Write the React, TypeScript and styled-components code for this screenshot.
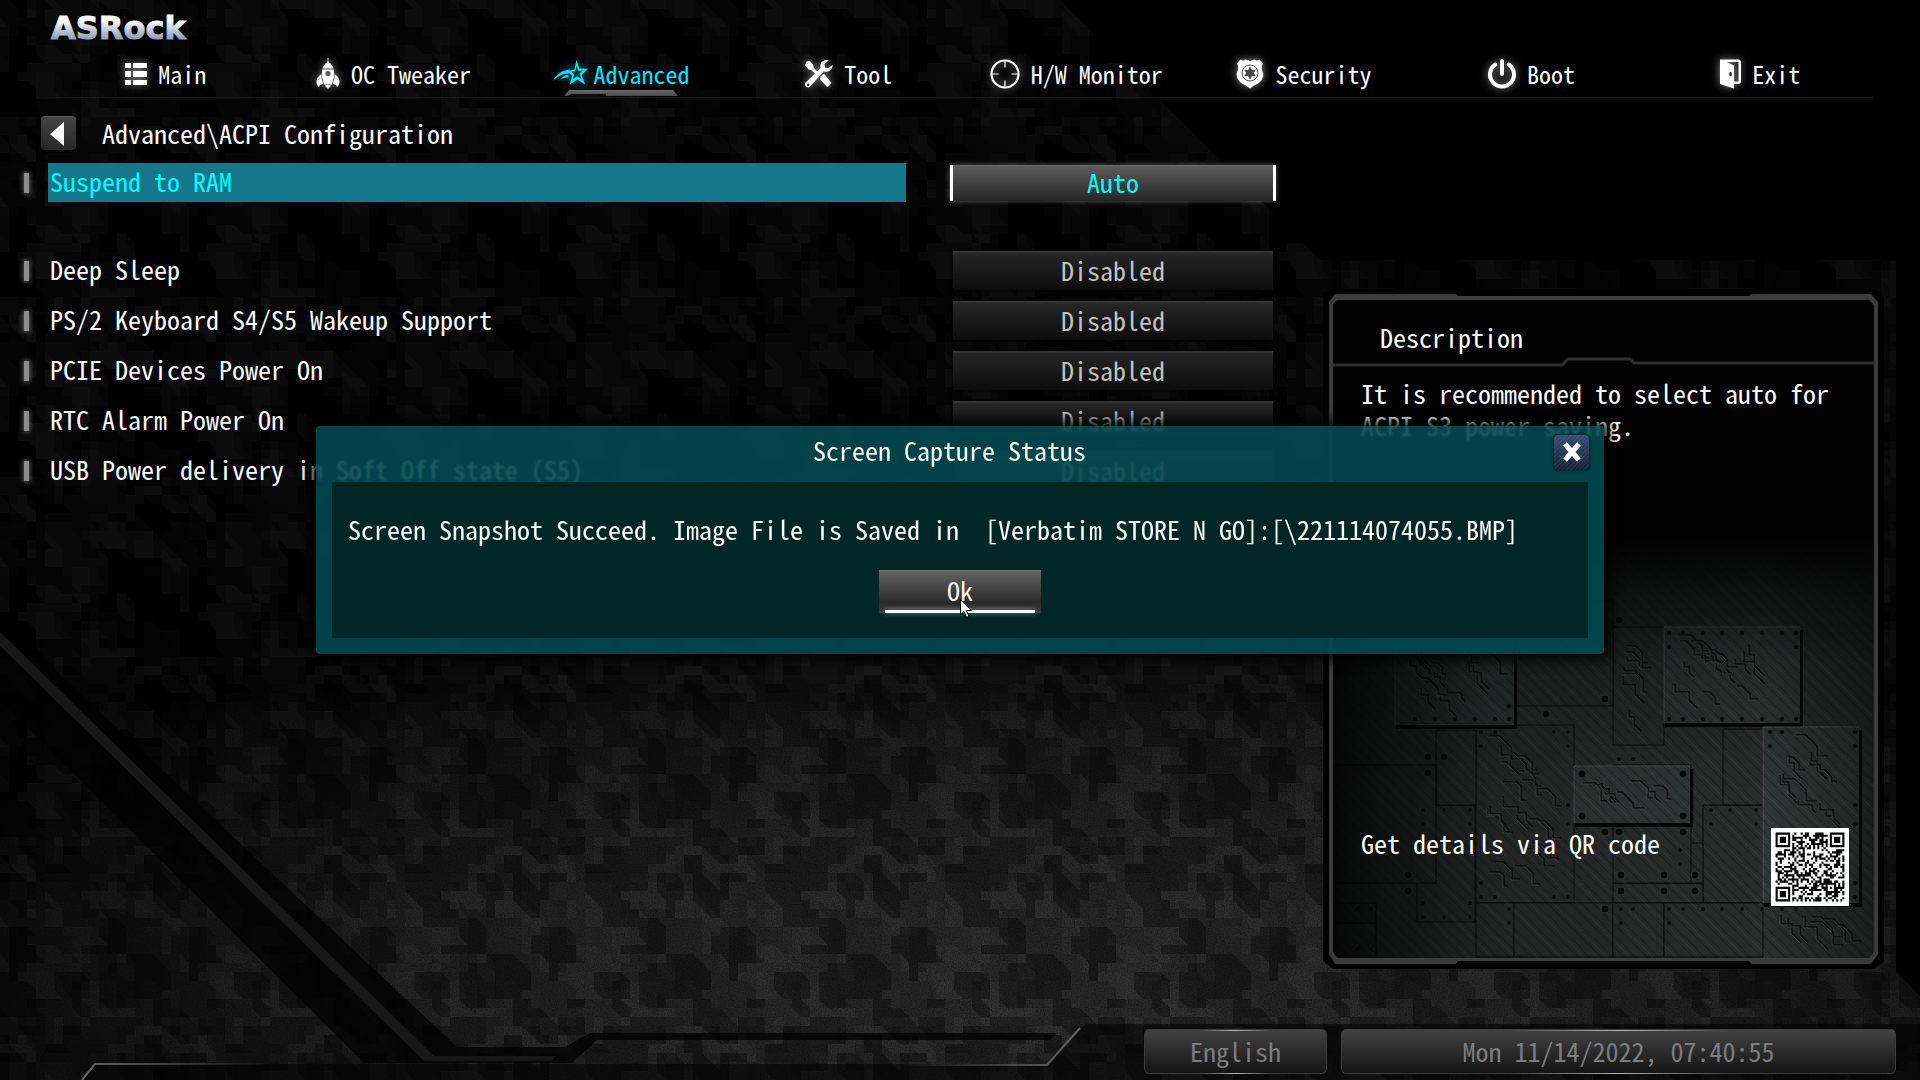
import React from "react";
import styled, { createGlobalStyle, css } from "styled-components";

const mono = `"Noto Sans Mono CJK JP", "Noto Sans CJK JP", "Liberation Mono", monospace`;

const GlobalStyle = createGlobalStyle`
  *, *::before, *::after { box-sizing: border-box; }
  body { margin: 0; background: #000; }
  button, select { font: inherit; font-feature-settings: inherit; }
`;

/* ---------- deterministic random shapes for the camouflage and QR art ---------- */

function rng(seed: number) {
  let s = seed;
  return () => {
    s = (s * 1664525 + 1013904223) % 4294967296;
    return s / 4294967296;
  };
}

const TILE = 180;

function camo(seed: number, count: number) {
  const r = rng(seed);
  let d = "";
  for (let i = 0; i < count; i++) {
    const x = Math.floor(r() * 20) * 9;
    const y = Math.floor(r() * 20) * 9;
    const w = 9 + Math.floor(r() * 3) * 9;
    const h = 9 + Math.floor(r() * 3) * 9;
    const k = r() > 0.62 ? 9 + Math.floor(r() * 2) * 9 : 0;
    for (const ox of [0, -TILE]) {
      for (const oy of [0, -TILE]) {
        d += `M${x + ox} ${y + oy}h${w}l${k} ${k}v${h}h${-w}l${-k} ${-k}z`;
      }
    }
  }
  return d;
}

const camoLight = camo(11, 48);
const camoDim = camo(47, 44);
const camoDark = camo(83, 42);

function qrPath() {
  const n = 33;
  const r = rng(2022);
  const finder = (x: number, y: number) => {
    const d = Math.max(Math.abs(x - 3), Math.abs(y - 3));
    return d === 3 || d <= 1;
  };
  let d = "";
  for (let y = 0; y < n; y++) {
    for (let x = 0; x < n; x++) {
      let on = r() > 0.5;
      if (x < 8 && y < 8) on = finder(x, y) && x < 7 && y < 7;
      else if (x > n - 9 && y < 8) on = finder(x - (n - 7), y) && x > n - 8 && y < 7;
      else if (x < 8 && y > n - 9) on = finder(x, y - (n - 7)) && x < 7 && y > n - 8;
      else if (x > 23 && x < 29 && y > 23 && y < 29) on = Math.max(Math.abs(x - 26), Math.abs(y - 26)) !== 1;
      else if (x === 6 || y === 6) on = (x + y) % 2 === 0;
      if (on) d += `M${x} ${y}h1v1h-1z`;
    }
  }
  return d;
}

/* ---------- layout ---------- */

const Screen = styled.div`
  position: relative;
  isolation: isolate;
  min-height: 100vh;
  display: flex;
  flex-direction: column;
  padding-bottom: 6px;
  overflow: hidden;
  color: #fff;
  font-family: ${mono};
  font-feature-settings: "hwid";
  font-size: 26px;
  line-height: 32px;
`;

const Backdrop = styled.svg`
  position: absolute;
  inset: 0;
  z-index: -1;
  width: 100%;
  height: 100%;
`;

const Header = styled.header`
  display: flex;
  flex-direction: column;
`;

const Brand = styled.div`
  height: 52px;
  padding: 6px 0 0 50px;
`;

const Logo = styled.svg`
  display: block;
  width: 150px;
  height: 44px;
`;

const Tabs = styled.nav`
  display: grid;
  grid-template-columns: repeat(8, 1fr);
  height: 46px;
  margin: 0 47px 0 49px;
  padding: 0 0 0 3px;
  border-bottom: 1px solid #161818;
`;

const Tab = styled.a<{ $active?: boolean }>`
  position: relative;
  display: flex;
  align-items: center;
  justify-content: center;
  gap: 11px;
  padding-bottom: 1px;
  font-size: 24px;
  color: ${(p) => (p.$active ? "#00e5ff" : "#fff")};
  text-decoration: none;
  white-space: nowrap;

  svg {
    flex: none;
    overflow: visible;
    filter: drop-shadow(0 0 4px ${(p) => (p.$active ? "rgba(0, 229, 255, 0.5)" : "rgba(255, 255, 255, 0.55)")});
  }

  ${(p) =>
    p.$active &&
    css`
      gap: 6px;
      &::after {
        content: "";
        position: absolute;
        left: 50%;
        bottom: 1px;
        width: 114px;
        height: 6px;
        transform: translateX(-50%);
        background: linear-gradient(#6a6a6a, #474747);
        clip-path: polygon(5px 0, 109px 0, 100% 100%, 42px 100%, 42px 4px, 7px 4px, 4px 100%, 0 100%);
      }
    `}
`;

const Content = styled.div`
  flex: 1;
  display: grid;
  grid-template-columns: minmax(0, 1fr) 550px;
  column-gap: 53px;
  padding: 0 41px 0 24px;
`;

const Settings = styled.main`
  padding-top: 18px;
`;

const Crumb = styled.div`
  display: flex;
  align-items: center;
  gap: 26px;
  height: 34px;
  margin: 0 0 13px 17px;
`;

const CrumbTitle = styled.h1`
  margin: 0;
  font-size: 26px;
  font-weight: 400;
`;

const BackButton = styled.button`
  display: grid;
  place-items: center;
  width: 35px;
  height: 34px;
  padding: 0 4px 0 0;
  border: 0;
  border-top: 1px solid #5a5a5a;
  border-radius: 4px;
  background: linear-gradient(#454545, #262626);
`;

const Rows = styled.div`
  display: flex;
  flex-direction: column;
  gap: 11px;
`;

const Row = styled.div<{ $active?: boolean }>`
  display: grid;
  grid-template-columns: 5px minmax(0, 1fr) 326px;
  align-items: center;
  height: 39px;
  margin-bottom: ${(p) => (p.$active ? "38px" : "0")};
`;

const Marker = styled.span`
  width: 5px;
  height: 20px;
  background: #8c8c8c;
  box-shadow: 0 0 5px 1px rgba(255, 255, 255, 0.35);
`;

const RowLabel = styled.label<{ $active?: boolean }>`
  height: 39px;
  margin: 0 44px 0 19px;
  padding: 2px 2px 0;
  background: ${(p) => (p.$active ? "#15778a" : "transparent")};
  color: ${(p) => (p.$active ? "#00fbff" : "#fff")};
  white-space: nowrap;
`;

const Value = styled.select<{ $active?: boolean }>`
  appearance: none;
  height: 39px;
  margin: 0 3px;
  padding: 0 0 4px;
  border: 0;
  border-top: 2px solid #333;
  border-radius: 0;
  background: linear-gradient(#262626, #0c0c0c);
  box-shadow: 0 0 4px #000;
  color: #c0c0c0;
  text-align: center;
  text-align-last: center;

  ${(p) =>
    p.$active &&
    css`
      height: 36px;
      margin: 0;
      padding: 0 0 2px;
      border: solid #fff;
      border-width: 0 3px;
      background: linear-gradient(#696969, #5a5a5a 2px, #262626);
      box-shadow: 0 0 5px rgba(255, 255, 255, 0.35);
      color: #00fbff;
    `}
`;

const Description = styled.aside`
  position: relative;
  isolation: isolate;
  display: flex;
  flex-direction: column;
  margin: 196px 0 65px;
`;

const PanelArt = styled.svg`
  position: absolute;
  inset: 0;
  z-index: -1;
  width: 100%;
  height: 100%;
  overflow: visible;
`;

const PanelTitle = styled.h2`
  margin: 0;
  padding: 27px 0 0 51px;
  font-size: 26px;
  font-weight: 400;
`;

const Divider = styled.svg`
  display: block;
  width: 100%;
  height: 14px;
`;

const HelpText = styled.p`
  flex: 1;
  margin: 0;
  padding: 10px 30px 0 32px;
`;

const QrRow = styled.div`
  display: flex;
  justify-content: space-between;
  padding: 0 30px 58px 32px;
  line-height: 30px;
`;

const QrCode = styled.svg`
  flex: none;
  width: 78px;
  height: 78px;
`;

const Footer = styled.footer`
  display: flex;
  justify-content: flex-end;
  gap: 14px;
  padding-right: 24px;
`;

const FooterItem = styled.button<{ $width: number }>`
  position: relative;
  width: ${(p) => p.$width}px;
  height: 45px;
  padding: 0 0 2px;
  border: 1px solid #3c3c3c;
  border-radius: 5px;
  background: linear-gradient(#424242, #141414);
  color: #7d7d7d;

  &::before,
  &::after {
    content: "";
    position: absolute;
    left: 30%;
    right: 30%;
    height: 1px;
    background: linear-gradient(90deg, transparent, #b0b0b0, transparent);
  }
  &::before { top: 0; }
  &::after { bottom: -1px; }
`;

const Overlay = styled.div`
  position: absolute;
  inset: 0;
  display: grid;
  place-items: center;
`;

const Dialog = styled.section`
  width: min(1288px, 92vw);
  padding: 0 16px 16px;
  border-radius: 4px;
  background: rgba(0, 75, 81, 0.88);
  box-shadow: 0 0 14px 5px #000;
  backdrop-filter: blur(1px);
`;

const DialogHeader = styled.header`
  display: flex;
  align-items: flex-start;
  height: 56px;
  margin-right: -2px;
  padding: 8px 0 0 14px;
`;

const DialogTitle = styled.h2`
  flex: 1;
  margin: 0;
  font-size: 26px;
  font-weight: 400;
  text-align: center;
`;

const CloseButton = styled.button`
  display: grid;
  place-items: center;
  width: 37px;
  height: 37px;
  padding: 0 0 1px;
  border: 1px solid #0c2a3a;
  border-radius: 5px;
  background:
    repeating-linear-gradient(135deg, rgba(255, 255, 255, 0.05) 0 1px, transparent 1px 3px),
    linear-gradient(#354f70, #152338);
  box-shadow: 0 0 2px rgba(0, 0, 0, 0.6);
`;

const DialogBody = styled.div`
  display: flex;
  flex-direction: column;
  align-items: center;
  gap: 25px;
  padding: 31px 16px 25px;
  background: #002726;
`;

const Message = styled.p`
  align-self: stretch;
  margin: 0;
  white-space: pre-wrap;
`;

const OkButton = styled.button`
  position: relative;
  width: 162px;
  height: 43px;
  padding: 0 0 4px;
  border: 0;
  border-top: 1px solid #777;
  background: linear-gradient(#636363, #2a2a2a 75%, #3a3a3a);
  color: #f4f4f4;

  &::after {
    content: "";
    position: absolute;
    left: 6px;
    right: 6px;
    bottom: 0;
    height: 3px;
    background: #fff;
    box-shadow: 0 0 5px rgba(255, 255, 255, 0.5);
  }
`;

const Pointer = styled.svg`
  position: absolute;
  z-index: 1;
  left: 50%;
  top: 28px;
  width: 12px;
  height: 19px;
`;

/* ---------- icons ---------- */

const MainIcon = () => (
  <svg width="22" height="32" viewBox="0 0 22 32" fill="currentColor">
    <path d="M0 5h6v5H0zM8 5h14v5H8zM0 13h6v6H0zM8 13h14v6H8zM0 22h6v5H0zM8 22h14v5H8z" />
  </svg>
);

const RocketIcon = () => (
  <svg width="24" height="32" viewBox="0 0 24 32" fill="currentColor">
    <path d="M11.500 0h1v4c3 2 4.500 4.200 5 6.500h-11c.5-2.300 2-4.500 5-6.500z" />
    <path fillRule="evenodd" d="M6.200 11.500h11.600c.7 5-.2 11-2.300 15h-7c-2.100-4-3-10-2.300-15zM12 13a2.600 2.600 0 1 0 0 5.200A2.600 2.600 0 0 0 12 13z" />
    <path d="M5.500 16c-4 2.500-5.800 6-4.800 9.500.4 1.500 1.200 2.600 2.200 3.500.5-2 2.300-2.800 4.500-3.200C6 22.500 5.300 19.500 5.500 16zM18.500 16c4 2.500 5.800 6 4.800 9.500-.4 1.500-1.200 2.600-2.200 3.500-.5-2-2.300-2.800-4.500-3.200 1.400-3.300 2.100-6.300 1.900-9.800zM9 27h6l-1 2.200h-1l-1 2-1-2h-1z" />
  </svg>
);

const StarIcon = () => (
  <svg width="35" height="32" viewBox="0 0 35 32" fill="currentColor">
    <path fillRule="evenodd" d="M23.500 2l2.800 8.500 8.700.2-6.400 6.300 3.600 9.500-7.900-5-7.600 5.200 2.300-8.900-4.600-4.700 7-1.600zM23.600 8.200l-1.500 5-3.600.6 2.700 2.700-1.300 4.600 4.300-2.900 4.200 2.600-2-5 3-3-4.300-.1z" />
    <path d="M17 11.500C8.500 12 3 17 0 23c4.500-4.800 9.500-7.500 15.500-7.500z" />
    <path d="M15.500 17c-4.200.5-6.700 2.300-8.500 4.500 2.700-1.400 5.200-2 8.500-2z" />
  </svg>
);

const ToolIcon = () => (
  <svg width="28" height="32" viewBox="0 0 28 32" fill="currentColor">
    <path d="M1.500 3.500l3.200-.8 3.600 4.100.2 2.800 6.300 6.800-2 2.100-6.600-6.600-2.600-.4L0 7.300z" />
    <path d="M16 18.200l3-2.400 7.200 8.700c.3 1.200-2.700 4.600-4.300 4.300l-7-7.700z" />
    <path d="M23.800 2.300c-3.300-.7-7 .2-8.200 3.600-.5 1.600-.3 2.900.1 4L.8 24.200c-1.700 2-.5 5.300 2.400 5.200 1 0 1.800-.6 2.400-1.300L18.500 13.600c3.800 1 8.700-.8 9.300-6.800l-4.500 3.500-3.400-.8-.5-3.200z" />
    <circle cx="3.200" cy="26.700" r="1.200" fill="#222" />
  </svg>
);

const MonitorIcon = () => (
  <svg width="30" height="32" viewBox="0 0 30 32" fill="none" stroke="currentColor">
    <circle cx="15" cy="16" r="13.500" strokeWidth="2.200" />
    <path d="M15 3v6.500M15 22.500V29M2 16h6.500M21.500 16H28" strokeWidth="1.200" />
  </svg>
);

const SecurityIcon = () => (
  <svg width="28" height="32" viewBox="0 0 28 32" fill="currentColor">
    <path d="M4.500 1.500c1.700 1.200 3.300 1.200 5 0L14 3l4.500-1.500c1.700 1.200 3.300 1.200 5 0L27 5.500c-2 3.500-1.300 6 .2 9.500 1 7-4.700 11-9.200 12.500L14 30.500l-4-3C5.500 26-.2 22 .8 15c1.500-3.500 2.200-6 .2-9.500z" />
    <circle cx="14" cy="15" r="8" fill="none" stroke="#555" strokeWidth="1" />
    <path fill="#4a4a4a" d="M14 8.500l1.900 3.400 3.900-.1-2 3.200 2 3.300-3.900-.1-1.900 3.400-1.900-3.400-3.900.1 2-3.300-2-3.200 3.900.1z" />
  </svg>
);

const BootIcon = () => (
  <svg width="28" height="32" viewBox="0 0 28 32" fill="none" stroke="currentColor" strokeLinecap="round">
    <path d="M7.300 6.500a12 12 0 1 0 13.400 0" strokeWidth="4" />
    <path d="M14 3v13" strokeWidth="4" />
  </svg>
);

const ExitIcon = () => (
  <svg width="23" height="32" viewBox="0 0 23 32" fill="currentColor">
    <path d="M2 1.500h18.500c1.500 0 2.500 1 2.500 2.500v19.500c0 1.500-1 2.500-2.500 2.500H16v-2.500h4.500V4H9l7 3.500v23L2 26z" />
    <ellipse cx="12.500" cy="16" rx="1.300" ry="2.300" fill="#222" />
  </svg>
);

/* ---------- pictures ---------- */

const BackdropArt = () => (
  <Backdrop viewBox="0 0 1920 1080" preserveAspectRatio="xMidYMid slice" aria-hidden="true">
    <defs>
      <radialGradient id="lit" gradientUnits="userSpaceOnUse" cx="0" cy="0" r="1" gradientTransform="translate(1060 1000) scale(1250 420)">
        <stop offset="0" stopColor="#2a2a2a" />
        <stop offset="0.45" stopColor="#202020" />
        <stop offset="0.8" stopColor="#0d0d0d" />
        <stop offset="1" stopColor="#010101" />
      </radialGradient>
      <pattern id="camo" width={TILE} height={TILE} patternUnits="userSpaceOnUse">
        <path d={camoDim} fill="#fff" fillOpacity="0.016" />
        <path d={camoLight} fill="#fff" fillOpacity="0.032" />
        <path d={camoDark} fill="#000" fillOpacity="0.34" />
      </pattern>
      <filter id="grain" x="0" y="0" width="100%" height="100%">
        <feTurbulence type="fractalNoise" baseFrequency="0.7" numOctaves="2" seed="4" />
        <feColorMatrix values="0 0 0 0 0  0 0 0 0 0  0 0 0 0 0  1.6 0 0 0 -0.55" />
      </filter>
      <clipPath id="plate">
        <path d="M0 0H1060L1320 260H1896V972L1920 996V1080H0z" />
      </clipPath>
      <linearGradient id="tipLeft">
        <stop offset="0" stopColor="#666" />
        <stop offset="1" stopColor="#666" stopOpacity="0" />
      </linearGradient>
      <linearGradient id="tipRight">
        <stop offset="0" stopColor="#666" stopOpacity="0" />
        <stop offset="1" stopColor="#666" />
      </linearGradient>
    </defs>
    <rect width="1920" height="1080" fill="#000" />
    <g clipPath="url(#plate)">
      <rect width="1920" height="1080" fill="url(#lit)" />
      <rect width="1920" height="1080" fill="url(#camo)" />
      <rect y="680" width="1920" height="400" filter="url(#grain)" opacity="0.5" />
    </g>
    <path d="M0 618L457 1047H565L590 1033H1057L1050 1040H597L572 1063H364L0 700z" fill="#020202" fillOpacity="0.75" />
    <path d="M0 632L434 1056H556L552 1061H424L0 646z" fill="#171717" />
    <path d="M95 1064H1047L1085 1024H1920V1080H82z" fill="#000" fillOpacity="0.55" />
    <path d="M82 1080L95 1064H270" fill="none" stroke="url(#tipLeft)" strokeWidth="2" />
    <path d="M900 1065H1047L1080 1028" fill="none" stroke="url(#tipRight)" strokeWidth="2" />
  </Backdrop>
);

type Box = [number, number, number, number];
const flatPlates: Box[] = [
  [147, 431, 98, 178], [88, 511, 58, 117], [374, 511, 60, 98], [284, 333, 51, 118],
  [284, 589, 90, 20], [343, 549, 31, 40], [186, 306, 98, 106], [107, 436, 40, 75],
  [394, 435, 40, 76], [284, 471, 78, 118], [5, 471, 102, 118], [147, 609, 38, 54],
  [185, 609, 99, 54], [284, 609, 51, 54], [335, 609, 99, 54], [5, 609, 42, 20], [5, 629, 42, 34],
];
const raisedPlates: Box[] = [
  [66, 330, 119, 101], [335, 333, 136, 96], [245, 472, 116, 57], [434, 433, 96, 176],
];
const smallRivets: [number, number][] = [
  ...[340, 354, 374, 393, 413, 433, 453, 467].flatMap((x) => [[x, 339], [x, 425], [x, 615]] as [number, number][]),
  ...[86, 106, 126, 146, 166, 180].map((x) => [x, 425] as [number, number]),
  [152, 438], [166, 438], [225, 438], [239, 438], [239, 452], [152, 452], [239, 511], [239, 530],
  [152, 589], [152, 603], [166, 603], [225, 603], [239, 603], [94, 516], [115, 516], [141, 516],
  [94, 530], [141, 530], [94, 609], [141, 609], [94, 623], [115, 623], [141, 623], [180, 615],
  [180, 629], [292, 615], [304, 615], [292, 629], [340, 629], [382, 516], [401, 516], [427, 516],
  [427, 530], [382, 530], [441, 438], [453, 438], [526, 438], [441, 452], [526, 452], [526, 511],
  [526, 530], [526, 589], [526, 603], [351, 556], [351, 570], [290, 465], [304, 465], [28, 615],
  [42, 615], [28, 655], [42, 655], [180, 412], [467, 353], [340, 353],
];
const bigRivets: [number, number][] = [
  [253, 480], [354, 480], [253, 522], [354, 522], [276, 405], [217, 420], [99, 463], [115, 463],
  [99, 479], [79, 581], [79, 597], [292, 581], [335, 581], [366, 581], [292, 597], [335, 597],
  [366, 597], [276, 615], [276, 538], [290, 538], [354, 538], [290, 326],
];

function cuts(boxes: Box[], seed: number) {
  const r = rng(seed);
  let d = "";
  boxes.forEach(([x, y, w, h]) => {
    const n = Math.round((w * h) / 800);
    for (let i = 0; i < n; i++) {
      const px = x + 8 + Math.floor(r() * (w - 40));
      const py = y + 8 + Math.floor(r() * (h - 38));
      const a = 5 + Math.floor(r() * 10);
      const b = 4 + Math.floor(r() * 8);
      d += r() > 0.5 ? `M${px} ${py}h${a}l${b} ${b}v${a}h${b}` : `M${px} ${py}v${b}h${a}v${b}l${b} ${b}`;
    }
  });
  return d;
}
const plateCuts = cuts([...raisedPlates, flatPlates[0], flatPlates[3], [434, 609, 106, 54]], 5);

const DescriptionArt = () => (
  <PanelArt viewBox="0 0 550 670" preserveAspectRatio="none" aria-hidden="true">
    <defs>
      <linearGradient id="fadeY" x1="0" y1="240" x2="0" y2="670" gradientUnits="userSpaceOnUse">
        <stop offset="0" stopColor="#fff" stopOpacity="0" />
        <stop offset="0.3" stopColor="#fff" stopOpacity="0.75" />
        <stop offset="0.6" stopColor="#fff" />
      </linearGradient>
      <linearGradient id="fadeX">
        <stop offset="0" stopColor="#000" stopOpacity="0.85" />
        <stop offset="0.3" stopColor="#000" stopOpacity="0.2" />
        <stop offset="0.8" stopColor="#000" stopOpacity="0" />
        <stop offset="1" stopColor="#000" stopOpacity="0.35" />
      </linearGradient>
      <mask id="fade">
        <rect width="550" height="670" fill="url(#fadeY)" />
      </mask>
      <pattern id="scratch" width="23" height="23" patternUnits="userSpaceOnUse">
        <path d="M-1 -1L24 24M11 -1L24 12M-1 11L12 24" stroke="#000" strokeOpacity="0.28" />
        <path d="M5 -1L24 18M-1 17L6 24" stroke="#fff" strokeOpacity="0.06" />
      </pattern>
    </defs>
    <path d="M-6 -1L5 -5H545L555 4V668L545 675H4L-6 667z" fill="#000" />
    <path d="M4 4H546V666H4z" fill="#020202" />
    <g mask="url(#fade)">
      <rect x="4" y="240" width="541" height="424" fill="#2a2d2c" />
      {flatPlates.map(([x, y, w, h]) => (
        <path key={`${x}-${y}`} d={`M${x} ${y}h${w}v${h}h${-w}z`} fill="#292c2b" stroke="#0b0b0b" />
      ))}
      {raisedPlates.map(([x, y, w, h]) => (
        <g key={`${x}-${y}`}>
          <rect x={x + 1} y={y + 3} width={w + 2} height={h + 1} fill="#030303" />
          <rect x={x} y={y} width={w} height={h} fill="#303635" />
          <path d={`M${x} ${y + h}V${y}H${x + w}`} fill="none" stroke="#565959" />
        </g>
      ))}
      <path d={plateCuts} fill="none" stroke="#0a0a0a" strokeWidth="1.500" />
      <path d={plateCuts} fill="none" stroke="#4a4e4e" strokeWidth="0.700" transform="translate(-1 1)" />
      <rect x="4" y="240" width="541" height="424" fill="url(#scratch)" />
      {smallRivets.map(([x, y], i) => (
        <circle key={i} cx={x} cy={y} r="2.500" fill="#0a0a0a" stroke="#3c4040" strokeWidth="0.600" />
      ))}
      {bigRivets.map(([x, y], i) => (
        <circle key={i} cx={x} cy={y} r="4" fill="#080808" stroke="#3c4040" strokeWidth="0.800" />
      ))}
      <rect x="4" y="240" width="541" height="424" fill="url(#fadeX)" />
    </g>
    <path
      fill="#3b3b3b"
      fillRule="evenodd"
      d="M0 8L6 0H127L129 2H420L422 0H542L549 8V660L542 670H422L420 667H129L127 670H6L0 660zM4 10V658L8 664H540L545 658V11L540 6H8z"
    />
  </PanelArt>
);

const tabs = [
  { name: "Main", Icon: MainIcon },
  { name: "OC Tweaker", Icon: RocketIcon },
  { name: "Advanced", Icon: StarIcon, active: true },
  { name: "Tool", Icon: ToolIcon },
  { name: "H/W Monitor", Icon: MonitorIcon },
  { name: "Security", Icon: SecurityIcon },
  { name: "Boot", Icon: BootIcon },
  { name: "Exit", Icon: ExitIcon },
];

const settings = [
  { id: "str", name: "Suspend to RAM", value: "Auto", active: true },
  { id: "deep-sleep", name: "Deep Sleep", value: "Disabled" },
  { id: "ps2-wake", name: "PS/2 Keyboard S4/S5 Wakeup Support", value: "Disabled" },
  { id: "pcie-wake", name: "PCIE Devices Power On", value: "Disabled" },
  { id: "rtc-wake", name: "RTC Alarm Power On", value: "Disabled" },
  { id: "usb-power", name: "USB Power delivery in Soft Off state (S5)", value: "Disabled" },
];

export default function App() {
  return (
    <Screen>
      <GlobalStyle />
      <BackdropArt />
      <Header>
        <Brand>
          <Logo viewBox="0 0 150 44" role="img" aria-label="ASRock">
            <defs>
              <linearGradient id="chrome" x1="0" y1="0" x2="0" y2="1">
                <stop offset="0.3" stopColor="#fff" />
                <stop offset="0.55" stopColor="#c3cad8" />
                <stop offset="0.8" stopColor="#8d9bb8" />
              </linearGradient>
            </defs>
            <text
              x="1"
              y="33"
              fill="url(#chrome)"
              stroke="url(#chrome)"
              strokeWidth="1"
              fontFamily="DejaVu Sans, sans-serif"
              fontWeight="700"
              fontSize="32"
            >
              ASRock
            </text>
          </Logo>
        </Brand>
        <Tabs>
          {tabs.map(({ name, Icon, active }) => (
            <Tab key={name} href="#" $active={active} aria-current={active ? "page" : undefined}>
              <Icon />
              {name}
            </Tab>
          ))}
        </Tabs>
      </Header>

      <Content>
        <Settings>
          <Crumb>
            <BackButton aria-label="Back">
              <svg width="14" height="24" viewBox="0 0 14 24">
                <path d="M14 0v24L0 12z" fill="#fff" />
              </svg>
            </BackButton>
            <CrumbTitle>Advanced\ACPI Configuration</CrumbTitle>
          </Crumb>
          <Rows>
            {settings.map((s) => (
              <Row key={s.id} $active={s.active}>
                <Marker />
                <RowLabel htmlFor={s.id} $active={s.active}>
                  {s.name}
                </RowLabel>
                <Value id={s.id} $active={s.active} defaultValue={s.value}>
                  <option>{s.value}</option>
                </Value>
              </Row>
            ))}
          </Rows>
        </Settings>

        <Description>
          <DescriptionArt />
          <PanelTitle>Description</PanelTitle>
          <Divider viewBox="0 0 550 14" preserveAspectRatio="none" aria-hidden="true">
            <path d="M4 12H233L239 6H301L305 10H545" fill="none" stroke="#2e2e2e" strokeWidth="3" />
          </Divider>
          <HelpText>It is recommended to select auto for ACPI S3 power saving.</HelpText>
          <QrRow>
            <span>Get details via QR code</span>
            <QrCode viewBox="-2.200 -2.200 37.400 37.400" role="img" aria-label="QR code">
              <path d="M-3 -3h40v40h-40z" fill="#fff" />
              <path d={qrPath()} fill="#000" />
            </QrCode>
          </QrRow>
        </Description>
      </Content>

      <Footer>
        <FooterItem $width={183}>English</FooterItem>
        <FooterItem $width={555}>Mon 11/14/2022, 07:40:55</FooterItem>
      </Footer>

      <Overlay>
        <Dialog role="dialog" aria-labelledby="dialog-title">
          <DialogHeader>
            <DialogTitle id="dialog-title">Screen Capture Status</DialogTitle>
            <CloseButton aria-label="Close">
              <svg width="22" height="22" viewBox="0 0 22 22">
                <path d="M4 3l14 16M18 3L4 19" stroke="#fff" strokeWidth="5" />
              </svg>
            </CloseButton>
          </DialogHeader>
          <DialogBody>
            <Message>{"Screen Snapshot Succeed. Image File is Saved in  [Verbatim STORE N GO]:[\\221114074055.BMP]"}</Message>
            <OkButton>
              Ok
              <Pointer viewBox="0 0 12 19" aria-hidden="true">
                <path d="M.5 .5v15l3.500-3 2.500 5.700 2.400-1-2.500-5.700h5z" fill="#fff" stroke="#000" />
              </Pointer>
            </OkButton>
          </DialogBody>
        </Dialog>
      </Overlay>
    </Screen>
  );
}
